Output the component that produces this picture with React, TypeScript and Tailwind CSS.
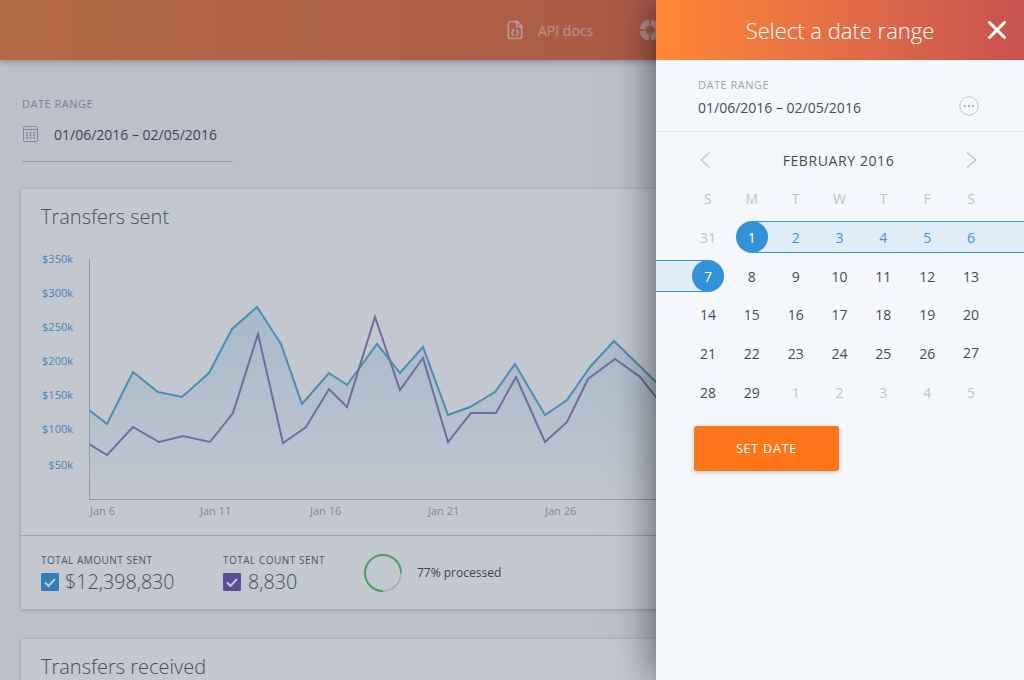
import { FileJson } from "lucide-react";

const blue: [number, number][] = [[89,410],[107,424],[133,372],[158,392],[182,397],[209,373],[232,329],[257,307],[281,344],[302,404],[329,373],[347,385],[377,344],[400,373],[423,347],[448,415],[470,407],[495,392],[515,364],[545,415],[567,400],[590,367],[614,341],[656,382],[680,402]];
const purple: [number, number][] = [[89,444],[107,455],[133,427],[159,442],[183,436],[210,442],[233,413],[258,334],[283,443],[306,427],[329,389],[347,407],[375,317],[400,390],[423,358],[448,442],[471,413],[496,413],[516,377],[545,442],[567,422],[588,379],[615,359],[640,377],[656,397],[680,420]];
const pts = (a: [number, number][]) => a.map((p) => p.join(",")).join(" ");

const yTicks = ["$350k", "$300k", "$250k", "$200k", "$150k", "$100k", "$50k"];
const xTicks = [
  { label: "Jan 6", w: "w-[110px]" },
  { label: "Jan 11", w: "w-[110px]" },
  { label: "Jan 16", w: "w-[118px]" },
  { label: "Jan 21", w: "w-[117px]" },
  { label: "Jan 26", w: "w-[110px]" },
];

const weeks = [
  ["31", "1", "2", "3", "4", "5", "6"],
  ["7", "8", "9", "10", "11", "12", "13"],
  ["14", "15", "16", "17", "18", "19", "20"],
  ["21", "22", "23", "24", "25", "26", "27"],
  ["28", "29", "1", "2", "3", "4", "5"],
];

function dayClass(r: number, c: number) {
  if ((r === 0 && c === 0) || (r === 4 && c >= 2)) return "text-[#bcc3cf]";
  if (r === 0 && c >= 2) return "text-[#3b94d9]";
  return "text-[#454c5c]";
}

function Check() {
  return (
    <svg viewBox="0 0 18 18" className="w-[18px] h-[18px]">
      <polyline points="4,9.5 7.5,13 14,6" fill="none" stroke="#fff" strokeWidth="2" />
    </svg>
  );
}

function Card({ title, children }: { title: string; children?: React.ReactNode }) {
  return (
    <section className="bg-white shadow-[0_1px_4px_rgba(40,50,80,0.3)]">
      <h2 className="h-[53px] pl-[20px] pt-[13px] text-[20px] leading-[30px] font-light text-[#555b69]">{title}</h2>
      {children}
    </section>
  );
}

export default function App() {
  return (
    <div className="relative w-[1024px] h-[680px] overflow-hidden bg-[#f4f6f8] font-['Open_Sans',sans-serif]">
      <header className="relative z-10 h-[60px] flex items-center bg-gradient-to-r from-[#ea7f3d] to-[#d65f48] shadow-[0_2px_6px_rgba(40,50,80,0.35)]">
        <div className="flex items-center ml-[507px] text-white/50">
          <FileJson size={20} strokeWidth={2.25} className="-ml-[2px]" />
          <span className="ml-[13px] text-[14px]">API docs</span>
          <svg viewBox="0 0 22 22" className="ml-[46px] w-[22px] h-[22px]" fill="none" stroke="currentColor">
            <circle cx="11" cy="11" r="7.5" strokeWidth="6" pathLength="100" strokeDasharray="21 4" strokeDashoffset="-2" />
          </svg>
        </div>
      </header>

      <main className="px-[21px]">
        <div className="ml-px w-[211px] pt-[36px] pb-[15px] border-b border-[#c4c9d6]">
          <div className="text-[11px] leading-[16px] tracking-[0.5px] text-[#9aa1b1]">DATE RANGE</div>
          <div className="mt-[10px] h-[24px] flex items-center">
            <svg viewBox="0 0 15 16" className="w-[15px] h-[16px] ml-px" fill="none" stroke="#a5acba">
              <rect x="0.5" y="0.5" width="14" height="15" rx="1" />
              <line x1="0.5" y1="3.5" x2="14.5" y2="3.5" />
              <path d="M3 7h2M6.5 7h2M10 7h2M3 9.5h2M6.5 9.5h2M10 9.5h2M3 12h2M6.5 12h2M10 12h2" strokeWidth="1.5" />
            </svg>
            <span className="ml-[16px] text-[14px] text-[#4a4e58]">01/06/2016 – 02/05/2016</span>
          </div>
        </div>

        <div className="mt-[27px]">
          <Card title="Transfers sent">
            <div className="flex h-[293px]">
              <div className="w-[52px] shrink-0 text-right text-[11px] leading-[34px] text-[#59a3d4]">
                {yTicks.map((t) => (
                  <div key={t} className="h-[34px] last:mt-[2px]">{t}</div>
                ))}
              </div>
              <div className="ml-[16px]">
                <svg viewBox="89 242 892 258" className="w-[892px] h-[258px] block">
                  <defs>
                    <linearGradient id="area" gradientUnits="userSpaceOnUse" x1="0" y1="300" x2="0" y2="499">
                      <stop offset="0" stopColor="#59b2de" stopOpacity="0.24" />
                      <stop offset="1" stopColor="#59b2de" stopOpacity="0.02" />
                    </linearGradient>
                  </defs>
                  <polygon points={`89,499 ${pts(blue)} 680,499`} fill="url(#area)" />
                  <polyline points={pts(blue)} fill="none" stroke="#5fb0d8" strokeWidth="2" />
                  <polyline points={pts(purple)} fill="none" stroke="#9084bc" strokeWidth="2" />
                  <line x1="89.5" y1="259" x2="89.5" y2="499.5" stroke="#b7bdc8" />
                  <line x1="89" y1="499.5" x2="981" y2="499.5" stroke="#b7bdc8" />
                </svg>
                <div className="flex pl-[1px] pt-[3px] text-[11px] leading-[16px] text-[#a3a9b5]">
                  {xTicks.map((t) => (
                    <div key={t.label} className={t.w}>{t.label}</div>
                  ))}
                </div>
              </div>
            </div>
            <div className="h-[74px] border-t border-[#c5ccdc] pl-[20px] pt-[17px] flex items-start text-[#4a4e58]">
              <div className="w-[182px]">
                <div className="text-[10px] leading-[14px] tracking-[0.5px] text-[#5d626d]">TOTAL AMOUNT SENT</div>
                <div className="mt-[5px] h-[20px] flex items-center">
                  <span className="w-[18px] h-[18px] rounded-[1px] bg-[#349de2]"><Check /></span>
                  <span className="ml-[6px] text-[19.7px] font-light text-[#565c68]">$12,398,830</span>
                </div>
              </div>
              <div className="w-[141px]">
                <div className="text-[10px] leading-[14px] tracking-[0.5px] text-[#5d626d]">TOTAL COUNT SENT</div>
                <div className="mt-[5px] h-[20px] flex items-center">
                  <span className="w-[18px] h-[18px] rounded-[1px] bg-[#7458ae]"><Check /></span>
                  <span className="ml-[7px] text-[19.7px] font-light text-[#565c68]">8,830</span>
                </div>
              </div>
              <svg viewBox="0 0 38 38" className="w-[38px] h-[38px] mt-[1px] rotate-90" fill="none" strokeWidth="2">
                <circle cx="19" cy="19" r="18" stroke="#dcdfe2" />
                <circle cx="19" cy="19" r="18" stroke="#60c96e" pathLength="100" strokeDasharray="75 100" />
              </svg>
              <span className="ml-[15px] mt-[12px] text-[12px] leading-[16px] text-[#4a4e58]">77% processed</span>
            </div>
          </Card>
        </div>

        <div className="mt-[30px]">
          <Card title="Transfers received" />
        </div>
      </main>

      <div className="absolute inset-0 z-20 bg-[rgba(33,48,81,0.27)]" />

      <aside className="absolute top-0 right-0 z-30 w-[368px] h-full bg-[#f4f7fb] shadow-[0_0_40px_rgba(0,0,0,0.6)]">
        <div className="relative h-[60px] flex items-center justify-center bg-gradient-to-r from-[#ff8833] to-[#c8524f]">
          <h1 className="text-[22px] font-light text-white">Select a date range</h1>
          <svg viewBox="0 0 18 18" className="absolute right-[18px] top-[21px] w-[18px] h-[18px]" stroke="#fff" strokeWidth="3" strokeLinecap="round">
            <line x1="1.5" y1="1.5" x2="16.5" y2="16.5" />
            <line x1="16.5" y1="1.5" x2="1.5" y2="16.5" />
          </svg>
        </div>

        <div className="h-[72px] pl-[42px] pr-[45px] pt-[17px] flex justify-between border-b border-[#e4e8ee]">
          <div>
            <div className="text-[11px] leading-[16px] tracking-[0.5px] text-[#9aa3b5]">DATE RANGE</div>
            <div className="mt-[5px] text-[14px] leading-[20px] text-[#454c5c]">01/06/2016 – 02/05/2016</div>
          </div>
          <svg viewBox="0 0 20 20" className="w-[20px] h-[20px] mt-[19px]">
            <circle cx="10" cy="10" r="9.2" fill="none" stroke="#bcc3cf" />
            <circle cx="6" cy="10" r="1.2" fill="#aab2c0" />
            <circle cx="10" cy="10" r="1.2" fill="#aab2c0" />
            <circle cx="14" cy="10" r="1.2" fill="#aab2c0" />
          </svg>
        </div>

        <div className="h-[56px] pl-[44px] pr-[47px] flex items-center justify-between">
          <svg viewBox="0 0 11 16" className="w-[11px] h-[16px]" fill="none" stroke="#bcc3cf" strokeWidth="1.2">
            <polyline points="10,0.5 1,8 10,15.5" />
          </svg>
          <span className="text-[14px] tracking-[0.6px] text-[#454c5c]">FEBRUARY 2016</span>
          <svg viewBox="0 0 11 16" className="w-[11px] h-[16px]" fill="none" stroke="#bcc3cf" strokeWidth="1.2">
            <polyline points="1,0.5 10,8 1,15.5" />
          </svg>
        </div>

        <div className="w-[307px] ml-[30px] mt-[1px]">
          <div className="grid grid-cols-7 h-[20px] text-center text-[14px] leading-[20px] text-[#bcc3cf]">
            {["S", "M", "T", "W", "T", "F", "S"].map((d, i) => (
              <div key={i}>{d}</div>
            ))}
          </div>
          <div className="mt-[9px]">
            {weeks.map((w, r) => (
              <div key={r} className="relative grid grid-cols-7 h-[38.75px] text-center text-[14px]">
                {r === 0 && (
                  <div className="absolute top-[3px] left-[66px] -right-[31px] h-[32px] bg-[#e1edf6] border-y border-[#3b94dc]" />
                )}
                {r === 1 && (
                  <div className="absolute top-[3px] -left-[30px] w-[52px] h-[32px] bg-[#e1edf6] border-y border-[#3b94dc]" />
                )}
                {w.map((d, c) => {
                  const on = (r === 0 && c === 1) || (r === 1 && c === 0);
                  return (
                    <div key={c} className="relative flex items-center justify-center">
                      {on ? (
                        <span className="w-[32px] h-[32px] rounded-full bg-[#3391d8] text-white flex items-center justify-center">{d}</span>
                      ) : (
                        <span className={`${dayClass(r, c)} ${d === "27" ? "-translate-y-px" : ""}`}>{d}</span>
                      )}
                    </div>
                  );
                })}
              </div>
            ))}
          </div>
          <button className="mt-[14px] ml-[8px] w-[145px] h-[45px] pt-[2px] rounded-[3px] bg-[#ff7519] text-white text-[12.5px] tracking-[0.8px] shadow-[0_1px_4px_rgba(60,60,80,0.3)]">
            SET DATE
          </button>
        </div>
      </aside>
    </div>
  );
}
